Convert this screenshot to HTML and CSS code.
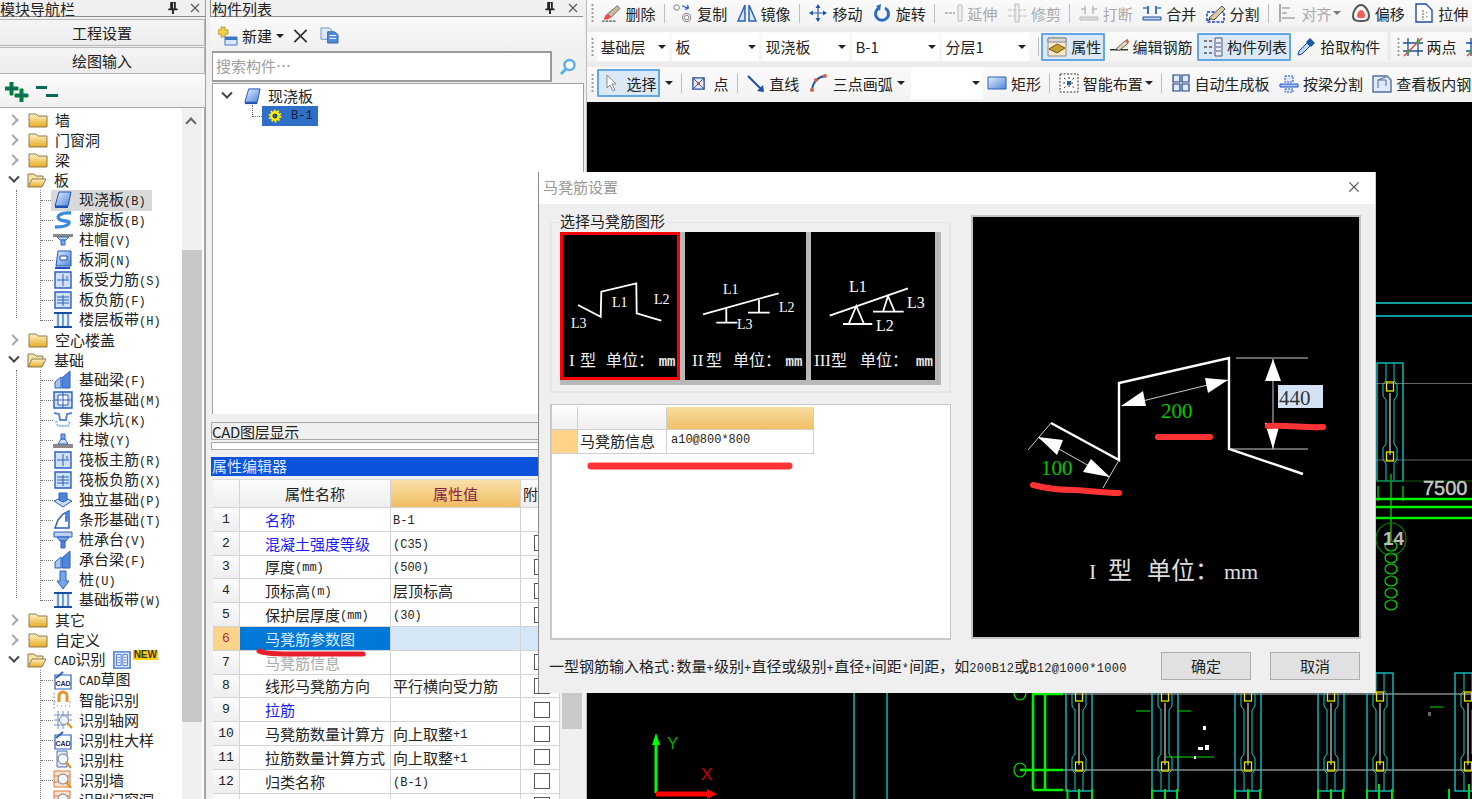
FILE: index.html
```html
<!DOCTYPE html>
<html lang="zh">
<head>
<meta charset="utf-8">
<title>马凳筋设置</title>
<link rel="stylesheet" href="styles.css">
</head>
<body>
<svg class="defs" aria-hidden="true">
  <defs>
    <linearGradient id="gold" x1="0" y1="0" x2="0" y2="1"><stop offset="0" stop-color="#fff3c4"/><stop offset="1" stop-color="#e8a820"/></linearGradient>
    <linearGradient id="blu" x1="0" y1="0" x2="1" y2="1"><stop offset="0" stop-color="#e4eefc"/><stop offset="1" stop-color="#4f86dc"/></linearGradient>
    <symbol id="f-c" viewBox="0 0 20 16"><path d="M1 2h7l2 2h9v11H1z" fill="url(#gold)" stroke="#8b7a55"/></symbol>
    <symbol id="f-o" viewBox="0 0 20 16"><path d="M1 15V2h6l2 2h7v3" fill="#f6e3a6" stroke="#8b7a55"/><path d="M1 15l4-8h14l-4 8z" fill="url(#gold)" stroke="#8b7a55"/></symbol>
    <symbol id="plate" viewBox="0 0 20 20"><path d="M6 2h12l-3 14H2z" fill="url(#blu)" stroke="#1f52b4"/><path d="M2 17h13" stroke="#1f52b4" stroke-width="2"/></symbol>
    <symbol id="spiral" viewBox="0 0 20 20"><path d="M18 3C8 2 3 6 6 9s11 1 10 4-8 4-14 4" fill="none" stroke="#3a8ae0" stroke-width="3.4"/></symbol>
    <symbol id="cap" viewBox="0 0 20 20"><path d="M0 4h20v3H0z" fill="#8a8a8a"/><path d="M4 7h12l-3 3h-6z" fill="#c8d8f0" stroke="#3568c0"/><path d="M8 10h4v5H8z" fill="#7aa4e8" stroke="#3568c0"/></symbol>
    <symbol id="hole" viewBox="0 0 20 20"><path d="M5 1h13v15H3z" fill="url(#blu)" stroke="#1f52b4"/><path d="M7 6h7v4H7z" fill="#fff" stroke="#1f52b4"/><path d="M2 18h15" stroke="#1f52b4" stroke-width="2"/></symbol>
    <symbol id="rb1" viewBox="0 0 20 20"><path d="M2 2h16v16H2z" fill="#cfe0f8" stroke="#2a60bc" stroke-width="1.4"/><path d="M10 4v12M4 10h12M14 6v3" stroke="#2a60bc" fill="none"/></symbol>
    <symbol id="rb2" viewBox="0 0 20 20"><path d="M2 2h16v16H2z" fill="#cfe0f8" stroke="#2a60bc" stroke-width="1.4"/><path d="M10 5v11M4 10h12M4 7h12M4 13h12" stroke="#2a60bc" fill="none"/></symbol>
    <symbol id="strip" viewBox="0 0 20 20"><path d="M1 3h18M1 17h18" stroke="#1c4fa8" stroke-width="2"/><path d="M5 4v12M10 4v12M15 4v12" stroke="#6f9be0" stroke-width="2.4"/></symbol>
    <symbol id="beam" viewBox="0 0 20 20"><path d="M2 18v-6l6-5v11z" fill="#a9c6f0" stroke="#2a60bc"/><path d="M9 8l8-7v17H9z" fill="#4f86dc" stroke="#2a60bc"/></symbol>
    <symbol id="raft" viewBox="0 0 20 20"><path d="M1 2h18v16H1z" fill="#cfe0f8" stroke="#2a60bc" stroke-width="1.4"/><path d="M5 5h10v10H5z" fill="#fff" stroke="#2a60bc"/><path d="M1 10h18M10 2v16" stroke="#2a60bc"/></symbol>
    <symbol id="pit" viewBox="0 0 20 20"><path d="M1 3l5 1 1 6h6l1-6 5-1" fill="none" stroke="#5a86d0" stroke-width="2"/><path d="M3 11l2 5h10l2-5" fill="none" stroke="#8fb0e8" stroke-width="2" stroke-dasharray="2 1"/></symbol>
    <symbol id="pier" viewBox="0 0 20 20"><path d="M0 14h20v4H0z" fill="#8a8a8a"/><path d="M5 14l3-5h4l3 5z" fill="#d0dff5" stroke="#3568c0"/><path d="M8 4h4v5H8z" fill="#7aa4e8" stroke="#3568c0"/></symbol>
    <symbol id="iso" viewBox="0 0 20 20"><path d="M1 11l9-4 9 4-9 6z" fill="#c8daf5" stroke="#2a60bc"/><path d="M6 10V3h8v7l-4 2z" fill="#4f86dc" stroke="#2a60bc"/></symbol>
    <symbol id="stripf" viewBox="0 0 20 20"><path d="M2 18l3-8 5-6 6-3v17z" fill="#fff" stroke="#2a60bc" stroke-width="1.5"/><path d="M12 3l5-2v10l-5 1z" fill="#4f86dc"/></symbol>
    <symbol id="pilecap" viewBox="0 0 20 20"><path d="M1 2h18v5H1z" fill="#bcd0ef" stroke="#2a60bc"/><path d="M4 7h12l-3 4H7z" fill="#7aa4e8" stroke="#2a60bc"/><path d="M8 11h4v7H8z" fill="#4f86dc" stroke="#2a60bc"/></symbol>
    <symbol id="pile" viewBox="0 0 20 20"><path d="M7 1h6v10h3l-6 8-6-8h3z" fill="#7aa4e8" stroke="#2a60bc"/></symbol>
    <symbol id="cad" viewBox="0 0 20 20"><path d="M2 5h16v14H2z" fill="#fff" stroke="#2a60bc" stroke-width="1.2"/><path d="M3 8l7-6" stroke="#2a60bc" stroke-width="2"/><text x="10" y="16" class="cadtxt" text-anchor="middle">CAD</text></symbol>
    <symbol id="magnet" viewBox="0 0 20 20"><path d="M6 12V6a4 4 0 018 0v6" fill="none" stroke="#e8942c" stroke-width="3"/><path d="M1 3v16M4 16h1M8 16h1M12 16h1M16 16h1M1 12h3M16 12h3" stroke="#4f86dc" stroke-dasharray="1.5 2"/></symbol>
    <symbol id="axis" viewBox="0 0 20 20"><path d="M1 5h18M1 10h18M1 15h12M5 1v18M10 1v18M15 1v12" stroke="#6f8fc8"/><circle cx="11" cy="10" r="4.5" fill="#eaf2ff" stroke="#888"/><path d="M14 13l5 5" stroke="#d9992c" stroke-width="2.4"/></symbol>
    <symbol id="col" viewBox="0 0 20 20"><path d="M4 1h10v16H4z" fill="#dfe8f8" stroke="#4f70b8"/><circle cx="10" cy="9" r="5" fill="#f2f6ff" stroke="#777"/><path d="M13 12l5 6" stroke="#d9992c" stroke-width="2.4"/></symbol>
    <symbol id="wall" viewBox="0 0 20 20"><path d="M1 1h16v16H1z" fill="#fbe3d2" stroke="#d9793c"/><path d="M1 6h16M1 12h16" stroke="#d9793c"/><circle cx="10" cy="9" r="5" fill="#f2f6ff" stroke="#777"/><path d="M13 12l5 6" stroke="#d9992c" stroke-width="2.4"/></symbol>
    <symbol id="split" viewBox="0 0 20 20"><path d="M1 1h18v18H1z" fill="#d8e6fb" stroke="#3a6cc4" stroke-width="1.5"/><path d="M4 4h5v12H4zM11 4h5v12h-5z" fill="#fff" stroke="#3a6cc4"/><path d="M5 7h3M5 10h3M5 13h3M12 7h3M12 10h3M12 13h3" stroke="#3a6cc4"/></symbol>
    <symbol id="gear" viewBox="0 0 16 16"><circle cx="8" cy="8" r="4.2" fill="none" stroke="#ffee00" stroke-width="3"/><circle cx="8" cy="8" r="6.4" fill="none" stroke="#ffee00" stroke-width="2" stroke-dasharray="2 2"/><circle cx="8" cy="8" r="2.2" fill="none" stroke="#222"/></symbol>

    <symbol id="t-del" viewBox="0 0 22 22"><path d="M1 20h16" stroke="#555" stroke-dasharray="3 1" stroke-width="1.5"/><path d="M7 12L18 3l3 3-10 10z" fill="#c9b8a0" stroke="#666"/><path d="M3 18c1-4 3-6 5-6l3 3c-1 2-4 4-8 3z" fill="#e84c4c"/></symbol>
    <symbol id="t-copy" viewBox="0 0 22 22"><circle cx="4" cy="5" r="3" fill="none" stroke="#777"/><circle cx="15" cy="16" r="4.500" fill="none" stroke="#777"/><circle cx="15" cy="16" r="2.500" fill="none" stroke="#777"/><path d="M10 3l7 3 M17 6l-1-4M17 6l-4 1" stroke="#2a60bc" fill="none" stroke-width="1.4"/></symbol>
    <symbol id="t-mirror" viewBox="0 0 20 20"><path d="M8 2v16H1zM12 2v16h7z" fill="#d8e6fb" stroke="#2a60bc" stroke-width="1.5"/></symbol>
    <symbol id="t-move" viewBox="0 0 20 20"><path d="M10 2v16M2 10h16" stroke="#1f5aa8" stroke-width="1.2"/><path d="M10 1L7.500 5h5zM10 19l-2.500-4h5zM1 10l4-2.500v5zM19 10l-4-2.500v5z" fill="#1f5aa8"/></symbol>
    <symbol id="t-rot" viewBox="0 0 20 20"><path d="M7 5a6.500 6.500 0 106 0" fill="none" stroke="#2a6cc8" stroke-width="3"/><path d="M9 1L4 3l4 5z" fill="#2a6cc8"/></symbol>
    <symbol id="t-ext" viewBox="0 0 20 20"><path d="M1 10h10" stroke="#bbb" stroke-width="2" stroke-dasharray="3 1"/><path d="M14 2h4v16h-4z" fill="#eee" stroke="#bbb"/></symbol>
    <symbol id="t-trim" viewBox="0 0 20 20"><path d="M1 7h18M1 13h18" stroke="#bbb" stroke-dasharray="4 1"/><path d="M8 1h4v18H8z" fill="#eee" stroke="#bbb"/></symbol>
    <symbol id="t-brk" viewBox="0 0 20 20"><path d="M1 14h18v3H1z" fill="#ddd" stroke="#bbb"/><path d="M6 3v8M14 3v8M2 6h5M18 6h-5" stroke="#bbb" stroke-width="1.6"/></symbol>
    <symbol id="t-mrg" viewBox="0 0 20 20"><path d="M1 14h18v3H1z" fill="#bcd0ef" stroke="#1f4fa0"/><path d="M6 3v8M14 3v8" stroke="#1f4fa0" stroke-width="1.6"/><path d="M1 5h6M19 5h-6" stroke="#2a80d8" stroke-width="1.6"/></symbol>
    <symbol id="t-seg" viewBox="0 0 20 20"><path d="M1 9h17v10H1z" fill="none" stroke="#1a3fd8" stroke-dasharray="3 1.5" stroke-width="1.5"/><path d="M3 15L16 3l3 3L8 17z" fill="#d9c9a8" stroke="#555"/><path d="M3 15l-1 3 3-1z" fill="#333"/></symbol>
    <symbol id="t-aln" viewBox="0 0 20 20"><path d="M3 1v18" stroke="#aaa" stroke-width="2"/><path d="M5 5h8M5 15h13M5 10h5" stroke="#bbb" stroke-width="2"/></symbol>
    <symbol id="t-off" viewBox="0 0 20 20"><path d="M2 13c0-5 4-11 8-11s8 6 8 11-4 5-8 5-8 0-8-5z" fill="none" stroke="#555" stroke-width="2"/><path d="M6 13c0-3 2-6 4-6s4 3 4 6-8 3-8 0z" fill="#f0605a"/></symbol>
    <symbol id="t-str" viewBox="0 0 20 20"><path d="M2 1h10l6 6v12H2z" fill="#fff" stroke="#1f4fa0" stroke-width="1.4"/><path d="M9 7v10M13 9v1M13 13v1" stroke="#555" stroke-dasharray="2 1"/></symbol>
    <symbol id="t-prop" viewBox="0 0 20 20"><path d="M1 1h18v18H1z" fill="#fdeacb" stroke="#888"/><path d="M1 1h18v4H1z" fill="#d8d8d8" stroke="#888"/><path d="M2 12l8-5 8 4-8 5z" fill="#c9a030" stroke="#6a5518"/></symbol>
    <symbol id="t-rebar" viewBox="0 0 22 20"><path d="M1 13h20" stroke="#333" stroke-width="1.6"/><path d="M8 12L18 3l3 3-10 8z" fill="#e8d8b0" stroke="#555"/><path d="M18 3l3 3 1-2-2-3z" fill="#e05a3a"/></symbol>
    <symbol id="t-list" viewBox="0 0 20 20"><path d="M1 3h3v2H1zM1 9h3v2H1zM1 15h3v2H1zM6 3h3v2H6zM6 9h3v2H6zM6 15h3v2H6z" fill="#777"/><path d="M12 1h7v18h-7z" fill="#e8eef8" stroke="#557"/><path d="M13 6h5M13 10h5M13 14h5" stroke="#557"/></symbol>
    <symbol id="t-pick" viewBox="0 0 20 20"><path d="M2 18l1-4 8-8 3 3-8 8z" fill="#bcd6f5" stroke="#1f4fa0"/><path d="M10 5l4-4 5 5-4 4z" fill="#1f5aa8"/></symbol>
    <symbol id="t-two" viewBox="0 0 20 20"><path d="M5 1v18M15 1v18M0 6h20M0 14h20" stroke="#1f4fa0" stroke-width="1.3"/><path d="M1 19L19 1" stroke="#e8402c" stroke-width="1.4"/><circle cx="5" cy="15" r="1.800" fill="#3aa83a"/><circle cx="15" cy="5" r="1.800" fill="#3aa83a"/></symbol>
    <symbol id="t-sel" viewBox="0 0 14 18"><path d="M2 1v13l3-3 3 6 2-1-3-6h4z" fill="#fff" stroke="#888"/></symbol>
    <symbol id="t-pt" viewBox="0 0 16 16"><path d="M2 2h12v12H2z" fill="#e4ecf8" stroke="#2a4a9c" stroke-width="1.4"/><path d="M2 2l12 12M14 2L2 14" stroke="#2a4a9c"/><circle cx="8" cy="8" r="1.600" fill="#e8402c"/></symbol>
    <symbol id="t-line" viewBox="0 0 20 20"><path d="M2 3l14 14" stroke="#1f4fa0" stroke-width="2"/><path d="M18 19l-7-1 6-6z" fill="#1f4fa0"/></symbol>
    <symbol id="t-arc" viewBox="0 0 20 20"><path d="M3 17C4 9 9 4 16 3" fill="none" stroke="#1f5aa8" stroke-width="1.8"/><circle cx="3" cy="17" r="2" fill="#e0603a"/><circle cx="7" cy="7" r="2" fill="#e0603a"/><circle cx="16" cy="3" r="2" fill="#e0603a"/></symbol>
    <symbol id="t-rect" viewBox="0 0 20 20"><path d="M1 4h18v12H1z" fill="url(#blu)" stroke="#2a60bc"/></symbol>
    <symbol id="t-smart" viewBox="0 0 20 20"><path d="M1 1h18v18H1z" fill="#fff" stroke="#333" stroke-dasharray="2 1.500"/><path d="M10 4v12M4 10h12M5 5l10 10M15 5L5 15" stroke="#333" stroke-dasharray="2 2"/><circle cx="10" cy="10" r="2" fill="#1f5aa8"/></symbol>
    <symbol id="t-auto" viewBox="0 0 20 20"><path d="M2 2h7v7H2zM11 2h7v7h-7zM2 11h7v7H2zM11 11h7v7h-7z" fill="#dfe9f8" stroke="#1f3f80" stroke-width="1.200"/></symbol>
    <symbol id="t-beam" viewBox="0 0 20 20"><path d="M1 11h18v3H1z" fill="#a9c6f0" stroke="#1f4fc8"/><path d="M6 3h8v6H6zM6 16h8v3H6z" fill="#dfe9f8" stroke="#1f4fc8" stroke-dasharray="2 1"/></symbol>
    <symbol id="t-view" viewBox="0 0 20 20"><path d="M1 3h14l4 4v12H1z" fill="#dfe9f8" stroke="#4f6f9c" stroke-width="1.4"/><path d="M6 15V7l8-3M6 7h8v6" fill="none" stroke="#4f6f9c"/></symbol>
    <symbol id="t-new" viewBox="0 0 20 20"><path d="M7 11h12v8H7z" fill="#d8e6fb" stroke="#3a78c8"/><path d="M7 11h12v3H7z" fill="#3a78c8"/><path d="M3 1h4v3h3v4H7v3H3V8H0V4h3z" fill="#f5d24a" stroke="#a8882a" stroke-width=".8"/></symbol>
    <symbol id="t-dup" viewBox="0 0 20 18"><path d="M1 1h9l2 2v10H1z" fill="#dfe9f8" stroke="#6a94c8"/><path d="M8 5h7l4 3v9H8z" fill="#4f8ad8" stroke="#3a68a8"/><path d="M10 9h7M10 12h7" stroke="#fff"/></symbol>
    <symbol id="t-plus" viewBox="0 0 24 20"><path d="M5 0h3v5h5v3H8v5H5V8H0V5h5zM15 7h3v5h5v3h-5v5h-3v-5h-5v-3h5z" fill="#0a6a5a" stroke="#083"/></symbol>
    <symbol id="t-minus" viewBox="0 0 24 20"><path d="M1 4h11v3H1zM11 12h12v3H11z" fill="#0a6a5a"/></symbol>
    <symbol id="t-pin" viewBox="0 0 12 14"><path d="M3 1h6v7h2v2H7v4H5v-4H1V8h2z" fill="#222"/><path d="M6 2h1v6H6z" fill="#eee"/></symbol>
    <symbol id="t-x" viewBox="0 0 12 12"><path d="M2 2l8 8M10 2l-8 8" stroke="#555" stroke-width="1.1"/></symbol>
    <symbol id="t-xb" viewBox="0 0 16 16"><path d="M1 1l14 14M15 1L1 15" stroke="#333" stroke-width="2"/></symbol>
    <symbol id="t-find" viewBox="0 0 18 18"><circle cx="10.500" cy="7" r="5" fill="#fff" stroke="#5aaee8" stroke-width="2.4"/><path d="M7 11l-5 5" stroke="#5aaee8" stroke-width="3"/></symbol>

    <g id="cadcol">
      <rect x="-13" y="0" width="26" height="118" fill="none" stroke="#10d0d0" stroke-width="1.3"/>
      <path d="M-4 0v18l-3 3v12l3 4v44l-3 4v12l3 3v18M4 0v18l3 3v12l-3 4v44l3 4v12l-3 3v18" fill="none" stroke="#10d0d0" stroke-width="1"/>
      <path d="M0 30v62" stroke="#808080" stroke-width="2"/>
      <rect x="-3.500" y="19" width="7" height="9" fill="none" stroke="#e6e600" stroke-width="1.3"/>
      <rect x="-3.500" y="89" width="7" height="9" fill="none" stroke="#e6e600" stroke-width="1.3"/>
    </g>
  </defs>
</svg>

<div class="app">
  <aside class="nav">
    <header class="pane-title nav-title"><span class="pane-name">模块导航栏</span><svg class="pin"><use href="#t-pin"/></svg><svg class="close"><use href="#t-x"/></svg></header>
    <button class="navbtn">工程设置</button>
    <button class="navbtn">绘图输入</button>
    <div class="nav-tools"><svg class="nt"><use href="#t-plus"/></svg><svg class="nt"><use href="#t-minus"/></svg></div>
    <div class="nav-body">
      <div class="tree">
        <div class="node"><i class="chev closed"></i><svg class="fold"><use href="#f-c"/></svg><span>墙</span></div>
        <div class="node"><i class="chev closed"></i><svg class="fold"><use href="#f-c"/></svg><span>门窗洞</span></div>
        <div class="node"><i class="chev closed"></i><svg class="fold"><use href="#f-c"/></svg><span>梁</span></div>
        <div class="node"><i class="chev open"></i><svg class="fold"><use href="#f-o"/></svg><span>板</span></div>
        <div class="group">
          <div class="leaf sel"><svg class="lic"><use href="#plate"/></svg><span>现浇板<b>(B)</b></span></div>
          <div class="leaf"><svg class="lic"><use href="#spiral"/></svg><span>螺旋板<b>(B)</b></span></div>
          <div class="leaf"><svg class="lic"><use href="#cap"/></svg><span>柱帽<b>(V)</b></span></div>
          <div class="leaf"><svg class="lic"><use href="#hole"/></svg><span>板洞<b>(N)</b></span></div>
          <div class="leaf"><svg class="lic"><use href="#rb1"/></svg><span>板受力筋<b>(S)</b></span></div>
          <div class="leaf"><svg class="lic"><use href="#rb2"/></svg><span>板负筋<b>(F)</b></span></div>
          <div class="leaf"><svg class="lic"><use href="#strip"/></svg><span>楼层板带<b>(H)</b></span></div>
        </div>
        <div class="node"><i class="chev closed"></i><svg class="fold"><use href="#f-c"/></svg><span>空心楼盖</span></div>
        <div class="node"><i class="chev open"></i><svg class="fold"><use href="#f-o"/></svg><span>基础</span></div>
        <div class="group">
          <div class="leaf"><svg class="lic"><use href="#beam"/></svg><span>基础梁<b>(F)</b></span></div>
          <div class="leaf"><svg class="lic"><use href="#raft"/></svg><span>筏板基础<b>(M)</b></span></div>
          <div class="leaf"><svg class="lic"><use href="#pit"/></svg><span>集水坑<b>(K)</b></span></div>
          <div class="leaf"><svg class="lic"><use href="#pier"/></svg><span>柱墩<b>(Y)</b></span></div>
          <div class="leaf"><svg class="lic"><use href="#rb1"/></svg><span>筏板主筋<b>(R)</b></span></div>
          <div class="leaf"><svg class="lic"><use href="#rb2"/></svg><span>筏板负筋<b>(X)</b></span></div>
          <div class="leaf"><svg class="lic"><use href="#iso"/></svg><span>独立基础<b>(P)</b></span></div>
          <div class="leaf"><svg class="lic"><use href="#stripf"/></svg><span>条形基础<b>(T)</b></span></div>
          <div class="leaf"><svg class="lic"><use href="#pilecap"/></svg><span>桩承台<b>(V)</b></span></div>
          <div class="leaf"><svg class="lic"><use href="#beam"/></svg><span>承台梁<b>(F)</b></span></div>
          <div class="leaf"><svg class="lic"><use href="#pile"/></svg><span>桩<b>(U)</b></span></div>
          <div class="leaf"><svg class="lic"><use href="#strip"/></svg><span>基础板带<b>(W)</b></span></div>
        </div>
        <div class="node"><i class="chev closed"></i><svg class="fold"><use href="#f-c"/></svg><span>其它</span></div>
        <div class="node"><i class="chev closed"></i><svg class="fold"><use href="#f-c"/></svg><span>自定义</span></div>
        <div class="node"><i class="chev open"></i><svg class="fold"><use href="#f-o"/></svg><span><b>CAD</b>识别</span><svg class="cadbadge"><use href="#split"/></svg><em class="newtag">NEW</em></div>
        <div class="group nolead">
          <div class="leaf"><svg class="lic"><use href="#cad"/></svg><span><b>CAD</b>草图</span></div>
          <div class="leaf"><svg class="lic"><use href="#magnet"/></svg><span>智能识别</span></div>
          <div class="leaf"><svg class="lic"><use href="#axis"/></svg><span>识别轴网</span></div>
          <div class="leaf"><svg class="lic"><use href="#cad"/></svg><span>识别柱大样</span></div>
          <div class="leaf"><svg class="lic"><use href="#col"/></svg><span>识别柱</span></div>
          <div class="leaf"><svg class="lic"><use href="#wall"/></svg><span>识别墙</span></div>
          <div class="leaf"><svg class="lic"><use href="#wall"/></svg><span>识别门窗洞</span></div>
        </div>
      </div>
      <div class="scroll"><i class="uparrow"></i><div class="thumb"></div></div>
    </div>
  </aside>

  <section class="mid">
    <header class="pane-title mid-title"><span class="pane-name">构件列表</span><svg class="pin"><use href="#t-pin"/></svg><svg class="close"><use href="#t-x"/></svg></header>
    <div class="mid-tools">
      <svg class="mi-new"><use href="#t-new"/></svg><span class="mi-label">新建</span><i class="caret"></i>
      <svg class="mi-x"><use href="#t-xb"/></svg>
      <svg class="mi-dup"><use href="#t-dup"/></svg>
    </div>
    <div class="search"><div class="search-in">搜索构件…</div><div class="search-go"><svg class="find"><use href="#t-find"/></svg></div></div>
    <div class="ctree">
      <div class="cnode"><i class="chev open"></i><svg class="cplate"><use href="#plate"/></svg><span>现浇板</span></div>
      <div class="cleaf"><span class="cpick"><svg class="cgear"><use href="#gear"/></svg><span>B-1</span></span></div>
    </div>
    <div class="layer-tab">CAD图层显示</div>
    <div class="layer-strip"></div>
    <div class="prop-title">属性编辑器</div>
    <div class="prop-wrap">
      <div class="ptable">
        <div class="prow phead"><div class="pn"></div><div class="pk pkh">属性名称</div><div class="pv pvh">属性值</div><div class="pc pch">附加</div></div>
        <div class="prow"><div class="pn">1</div><div class="pk link">名称</div><div class="pv"><b>B-1</b></div><div class="pc"></div></div>
        <div class="prow"><div class="pn">2</div><div class="pk link">混凝土强度等级</div><div class="pv"><b>(C35)</b></div><div class="pc"><i class="cb"></i></div></div>
        <div class="prow"><div class="pn">3</div><div class="pk">厚度<b>(mm)</b></div><div class="pv"><b>(500)</b></div><div class="pc"><i class="cb"></i></div></div>
        <div class="prow"><div class="pn">4</div><div class="pk">顶标高<b>(m)</b></div><div class="pv">层顶标高</div><div class="pc"><i class="cb"></i></div></div>
        <div class="prow"><div class="pn">5</div><div class="pk">保护层厚度<b>(mm)</b></div><div class="pv"><b>(30)</b></div><div class="pc"><i class="cb"></i></div></div>
        <div class="prow active"><div class="pn">6</div><div class="pk">马凳筋参数图</div><div class="pv"></div><div class="pc"></div></div>
        <div class="prow"><div class="pn">7</div><div class="pk dim">马凳筋信息</div><div class="pv"></div><div class="pc"><i class="cb"></i></div></div>
        <div class="prow"><div class="pn">8</div><div class="pk">线形马凳筋方向</div><div class="pv">平行横向受力筋</div><div class="pc"><i class="cb"></i></div></div>
        <div class="prow"><div class="pn">9</div><div class="pk link">拉筋</div><div class="pv"></div><div class="pc"><i class="cb"></i></div></div>
        <div class="prow"><div class="pn">10</div><div class="pk">马凳筋数量计算方</div><div class="pv">向上取整<b>+1</b></div><div class="pc"><i class="cb"></i></div></div>
        <div class="prow"><div class="pn">11</div><div class="pk">拉筋数量计算方式</div><div class="pv">向上取整<b>+1</b></div><div class="pc"><i class="cb"></i></div></div>
        <div class="prow"><div class="pn">12</div><div class="pk">归类名称</div><div class="pv"><b>(B-1)</b></div><div class="pc"><i class="cb"></i></div></div>
        <div class="prow"><div class="pn"></div><div class="pk"></div><div class="pv"></div><div class="pc"><i class="cb"></i></div></div>
      </div>
      <div class="pscroll"><div class="pthumb"></div></div>
      <svg class="mark mark-left" viewBox="0 0 110 10"><path d="M3 3c8 4 30 3 104 3" fill="none" stroke="#e8202c" stroke-width="5" stroke-linecap="round"/></svg>
    </div>
  </section>

  <main class="work">
    <div class="bars">
      <div class="tb tb1">
        <i class="grip"></i>
        <div class="tool"><svg class="ti"><use href="#t-del"/></svg><span>删除</span></div><i class="sep"></i>
        <div class="tool"><svg class="ti"><use href="#t-copy"/></svg><span>复制</span></div>
        <div class="tool"><svg class="ti"><use href="#t-mirror"/></svg><span>镜像</span></div><i class="sep"></i>
        <div class="tool"><svg class="ti"><use href="#t-move"/></svg><span>移动</span></div>
        <div class="tool"><svg class="ti"><use href="#t-rot"/></svg><span>旋转</span></div><i class="sep"></i>
        <div class="tool off"><svg class="ti"><use href="#t-ext"/></svg><span>延伸</span></div>
        <div class="tool off"><svg class="ti"><use href="#t-trim"/></svg><span>修剪</span></div><i class="sep"></i>
        <div class="tool off"><svg class="ti"><use href="#t-brk"/></svg><span>打断</span></div>
        <div class="tool"><svg class="ti"><use href="#t-mrg"/></svg><span>合并</span></div>
        <div class="tool"><svg class="ti"><use href="#t-seg"/></svg><span>分割</span></div><i class="sep"></i>
        <div class="tool off"><svg class="ti"><use href="#t-aln"/></svg><span>对齐</span><i class="caret"></i></div>
        <div class="tool"><svg class="ti"><use href="#t-off"/></svg><span>偏移</span></div>
        <div class="tool"><svg class="ti"><use href="#t-str"/></svg><span>拉伸</span></div>
      </div>
      <div class="tb tb2">
        <i class="grip"></i>
        <div class="combos">
          <div class="combo c-first"><span>基础层</span><i class="caret"></i></div>
          <div class="combo"><span>板</span><i class="caret"></i></div>
          <div class="combo"><span>现浇板</span><i class="caret"></i></div>
          <div class="combo"><span>B-1</span><i class="caret"></i></div>
          <div class="combo"><span>分层1</span><i class="caret"></i></div>
        </div>
        <i class="sep"></i>
        <div class="tool press p-prop"><svg class="ti"><use href="#t-prop"/></svg><span>属性</span></div>
        <div class="tool t-rebar"><svg class="ti"><use href="#t-rebar"/></svg><span>编辑钢筋</span></div>
        <div class="tool press p-list"><svg class="ti"><use href="#t-list"/></svg><span>构件列表</span></div>
        <div class="tool t-pick"><svg class="ti"><use href="#t-pick"/></svg><span>拾取构件</span></div>
        <i class="tb-break"></i>
        <i class="grip g-two"></i>
        <div class="tool"><svg class="ti"><use href="#t-two"/></svg><span>两点</span></div>
        <svg class="ti"><use href="#t-two"/></svg>
      </div>
      <div class="tb tb3">
        <i class="grip"></i>
        <div class="tool press p-sel"><svg class="ti-s"><use href="#t-sel"/></svg><span>选择</span></div><i class="caret"></i><i class="sep"></i>
        <div class="tool t-pt"><svg class="ti-pt"><use href="#t-pt"/></svg><span>点</span></div><i class="sep"></i>
        <div class="tool t-line"><svg class="ti"><use href="#t-line"/></svg><span>直线</span></div>
        <div class="tool"><svg class="ti"><use href="#t-arc"/></svg><span>三点画弧</span></div><i class="caret"></i>
        <div class="combo c-blank"><span></span><i class="caret"></i></div>
        <div class="tool t-rect"><svg class="ti"><use href="#t-rect"/></svg><span>矩形</span></div><i class="sep"></i>
        <div class="tool"><svg class="ti"><use href="#t-smart"/></svg><span>智能布置</span><i class="caret"></i></div><i class="sep"></i>
        <div class="tool"><svg class="ti"><use href="#t-auto"/></svg><span>自动生成板</span></div>
        <div class="tool"><svg class="ti"><use href="#t-beam"/></svg><span>按梁分割</span></div>
        <div class="tool"><svg class="ti"><use href="#t-view"/></svg><span>查看板内钢筋</span></div>
      </div>
    </div>
    <div class="canvas">
      <svg class="cadview" viewBox="587 102 885 697">
        <g class="cy">
          <path d="M854 680v119M887 680v119M1375 303h97M1375 316h97"/>
        </g>
        <path d="M1375 383.500h97M1375 460h97" stroke="#666" stroke-width="1"/>
        <path d="M1060 694h412M1060 770h412" stroke="#666" stroke-width="2"/>
        <use href="#cadcol" x="1390" y="363"/>
        <use href="#cadcol" x="1079" y="673"/>
        <use href="#cadcol" x="1165" y="673"/>
        <use href="#cadcol" x="1248" y="673"/>
        <use href="#cadcol" x="1331" y="673"/>
        <use href="#cadcol" x="1380" y="673"/>
        <use href="#cadcol" x="1468" y="673"/>
        <g class="gr2">
          <path d="M1375 499h97M1375 507h97M1375 518h97M1033 690v100M1045 690v100M1033 694h30M1020 770h43M1033 790h30"/>
        </g>
        <g class="gr">
          <path d="M1378 486v15M1403 486v15M1391 474v66M1136 711h14M1178 711h13M1165 757h49M1430 707h13"/>
          <path d="M1067.500 789v10M1079 789v10M1092 789v10M1152 789v10M1165 789v10M1177 789v10M1235 789v10M1248 789v10M1260 789v10M1318 789v10M1331 789v10M1343 789v10M1367 789v10M1379 784v15M1392 789v10M1449 789v10M1469 784v15" stroke-width="2"/>
          <ellipse cx="1391" cy="539" rx="15" ry="16" stroke="#0a7a0a"/>
          <ellipse cx="1391" cy="546" rx="6" ry="5"/><ellipse cx="1391" cy="558" rx="6" ry="5"/><ellipse cx="1391" cy="569" rx="6" ry="5"/><ellipse cx="1391" cy="581" rx="6" ry="5"/><ellipse cx="1391" cy="593" rx="6" ry="5"/><ellipse cx="1391" cy="605" rx="6" ry="5"/>
          <ellipse cx="1020" cy="693" rx="6" ry="7"/><ellipse cx="1020" cy="770" rx="6" ry="7"/>
        </g>
        <path d="M1375 481h97" stroke="#0a5a0a"/>
        <text x="1423" y="495" class="cad7500">7500</text>
        <text x="1383" y="545" class="cad14">14</text>
        <path d="M1203 726h3v4h-3zM1198 747h5v3h-5zM1205 745h4v5h-4zM1194 756h2v3h-2z" fill="#fff"/>
        <path d="M1428 712h3v4h-3z" fill="#666"/>
        <path d="M656 793v-50" stroke="#0f0" stroke-width="3"/><path d="M656 733l-4 12h8z" fill="#0f0"/>
        <path d="M656 794h52" stroke="#f00" stroke-width="5"/><path d="M717 794l-10-5v10z" fill="#f00"/>
        <text x="667" y="749" class="axy">Y</text>
        <text x="701" y="780" class="axx">X</text>
      </svg>
    </div>
  </main>

  <div class="dialog">
    <header class="dlg-title"><span>马凳筋设置</span><svg class="dlg-x"><use href="#t-x"/></svg></header>
    <div class="dlg-body">
      <div class="dlg-left">
        <fieldset class="pickset">
          <legend>选择马凳筋图形</legend>
          <div class="thumbs">
            <svg class="thumb-a" viewBox="0 0 120 148">
              <polyline class="w2" points="18,73 40.700,84.700 41.300,59.700 76.300,51.300 76.700,81.300 101.300,88.700"/>
              <text x="52" y="75" class="lb">L1</text><text x="94" y="72" class="lb">L2</text><text x="11" y="96" class="lb">L3</text>
              <text y="134" class="cap"><tspan x="9" class="capr">I</tspan><tspan x="20">型</tspan><tspan x="46">单位：</tspan><tspan x="98.700" class="capm">mm</tspan></text>
            </svg>
            <svg class="thumb-b" viewBox="0 0 121 148">
              <path class="w2" d="M18 82.300L93.700 61.300M41.300 76.300v14.400M31.300 90.700h21M74 68v12.700M63 80.700h21.700"/>
              <text x="38" y="62" class="lb">L1</text><text x="94" y="80" class="lb">L2</text><text x="52" y="97" class="lb">L3</text>
              <text y="134" class="cap"><tspan x="7" class="capr">II</tspan><tspan x="21">型</tspan><tspan x="48">单位：</tspan><tspan x="100.500" class="capm">mm</tspan></text>
            </svg>
            <svg class="thumb-c" viewBox="0 0 124 148">
              <path class="w2" d="M18.700 83.700L97 56.300M37.700 92L45.300 74 53 92M32 92h29.300M72 79.700L77 64l6.700 15.700M62 79.700h30.700"/>
              <text x="38" y="60" class="lb lb-l">L1</text><text x="96" y="76" class="lb lb-l">L3</text><text x="65" y="99" class="lb lb-l">L2</text>
              <text y="134" class="cap"><tspan x="3" class="capr">III</tspan><tspan x="20">型</tspan><tspan x="49">单位：</tspan><tspan x="105" class="capm">mm</tspan></text>
            </svg>
          </div>
        </fieldset>
        <div class="info">
          <div class="info-grid">
            <div class="ih ih0"></div><div class="ih ih1"></div><div class="ih ih2"></div>
            <div class="ir0"></div><div class="ir1">马凳筋信息</div><div class="ir2">a10@800*800</div>
          </div>
          <svg class="mark mark-info" viewBox="0 0 210 10"><path d="M4 5h202" fill="none" stroke="#f33" stroke-width="7" stroke-linecap="round"/></svg>
        </div>
      </div>
      <div class="preview">
        <svg class="prev-svg" viewBox="0 0 386 420">
          <polyline class="w3" points="78,206 146,243 146,166 256,141 256,232 330,257"/>
          <path class="thin" d="M78 206L55 233M146 243L130 271M263 141h72M256 232h79M300 142v90"/>
          <path class="thin" d="M66 221L136 260M149 189L255 163"/>
          <path d="M65 220l25 3-6 15zM137 260l-19-18-8 13zM148 189l22-15 3 15zM255 163l-23-2 3 15zM300 142l-8 22h16zM300 232l-8-26h15z" fill="#fff"/>
          <text x="68" y="258" class="gn">100</text>
          <text x="188" y="201" class="gn">200</text>
          <rect x="305" y="168" width="45" height="23" fill="#d3e3f5"/>
          <text x="306" y="188" class="gv">440</text>
          <text x="116" y="362" class="bigcap"><tspan class="bigm">I</tspan><tspan x="135">型</tspan><tspan x="174">单位：</tspan><tspan x="251" class="bigm">mm</tspan></text>
          <path d="M60 268c15 4 30 5 40 5s30 3 46 3" class="rd"/>
          <path d="M185 220h52" class="rd"/>
          <path d="M295 209c20-1 38 2 55 1" class="rd"/>
        </svg>
      </div>
    </div>
    <footer class="dlg-foot">
      <p class="hint">一型钢筋输入格式<b>:</b>数量<b>+</b>级别<b>+</b>直径或级别<b>+</b>直径<b>+</b>间距<b>*</b>间距，如<b>200B12</b>或<b>B12@1000*1000</b></p>
      <div class="dlg-btns"><button class="dbtn">确定</button><button class="dbtn">取消</button></div>
    </footer>
  </div>
</div>
</body>
</html>
```
FILE: styles.css
```css
* { box-sizing: border-box; }
html, body { margin: 0; padding: 0; height: 100%; overflow: hidden; }
body { font-family: "Noto Sans CJK SC", "Liberation Sans", sans-serif; font-size: 15px; color: #222; background: #f0f0f0; }
.defs { position: absolute; width: 0; height: 0; }
button { font: inherit; color: inherit; }
b { font-family: "Liberation Mono", monospace; font-size: 12px; font-weight: 400; }

.app { position: relative; display: flex; width: 1472px; height: 799px; overflow: hidden; }

/* panel titles */
.pane-title { position: relative; display: flex; align-items: center; height: 17px; border-bottom: 1px solid #8c8c8c; line-height: 15px; }
.pin { position: absolute; top: 1px; width: 12px; height: 13px; }
.close { position: absolute; top: 2px; width: 12px; height: 12px; }
.nav-title .pin { left: 167px; }
.nav-title .close { left: 189px; }
.mid-title .pin { left: 333px; }
.mid-title .close { left: 356px; }

/* left navigator */
.nav { flex: 0 0 206px; display: flex; flex-direction: column; height: 799px; border-right: 1px solid #a0a0a0; }
.navbtn { display: block; width: 205px; height: 27px; margin-top: 1px; padding: 0; background: linear-gradient(#f4f4f4, #ececec); border: 1px solid #b5b5b5; border-left: 0; line-height: 25px; }
.navbtn:first-of-type { margin-top: 2px; }
.nav-tools { display: flex; align-items: center; gap: 6px; height: 33px; padding: 2px 0 0 5px; background: linear-gradient(#fbfbfb, #f0f0f0); }
.nt { width: 24px; height: 20px; }
.nav-body { flex: 1; display: flex; height: 0; overflow: hidden; width: 205px; background: #fff; border-top: 1px solid #a8a8a8; border-right: 1px solid #a8a8a8; }
.tree { width: 182px; padding-top: 2px; overflow: hidden; flex: none; }
.node, .leaf { position: relative; display: flex; align-items: center; height: 20px; line-height: 20px; white-space: nowrap; }
.node .chev { margin: 0 9px 0 10px; }
.fold { width: 20px; height: 16px; margin-right: 7px; }
.chev { flex: none; display: block; width: 8px; height: 8px; border-right: 2px solid #aaa; border-bottom: 2px solid #aaa; }
.chev.closed { transform: rotate(-45deg); margin-right: 11px !important; margin-left: 9px !important; }
.chev.open { border-color: #444; transform: rotate(45deg) translate(-2px, -2px); }
.group { position: relative; }
.group::before { content: ""; position: absolute; left: 16px; top: 0; bottom: 12px; border-left: 1px dotted #777; }
.group.nolead::before { display: none; }
.group::after { content: ""; position: absolute; left: 40px; top: 0; bottom: 9px; border-left: 1px dotted #777; }
.leaf { padding-left: 53px; }
.leaf::before { content: ""; position: absolute; left: 41px; top: 10px; width: 12px; border-top: 1px dotted #777; }
.lic { flex: none; width: 20px; height: 20px; margin-right: 6px; }
.leaf.sel::after { content: ""; position: absolute; z-index: 0; left: 51px; top: 0; width: 101px; height: 21px; background: #d9d9d9; }
.leaf.sel > * { position: relative; z-index: 1; }
.cadtxt { font-family: "Liberation Sans", sans-serif; font-size: 7px; font-weight: 700; fill: #1c2a50; }
.cadbadge { width: 18px; height: 18px; margin-left: 7px; }
.newtag { margin: -11px 0 0 2px; padding: 0 1px; background: #ffd400; font: 700 10px/10px "Liberation Sans", sans-serif; color: #333; }
.scroll { flex: none; width: 20px; background: #f0f0f0; position: relative; padding-top: 142px; }
.uparrow { position: absolute; left: 5px; top: 11px; width: 8px; height: 8px; border-left: 2px solid #666; border-top: 2px solid #666; transform: rotate(45deg); }
.thumb { height: 472px; background: #c8c8c8; }

/* middle column */
.mid { flex: 0 0 381px; height: 799px; padding-left: 4px; border-right: 1px solid #bbb; }
.mid-title { width: 373px; border-left: 1px solid #8c8c8c; }
.mid-title .pane-name { margin-left: 1px; }
.mid-tools { display: flex; align-items: center; height: 34px; padding: 3px 0 0 8px; background: linear-gradient(#fafafa, #f0f0f0); margin-right: 2px; }
.mi-new { width: 20px; height: 20px; margin-right: 4px; }
.mi-label { width: 30px; }
.mi-x { width: 15px; height: 14px; margin-left: 9px; }
.mi-dup { width: 19px; height: 17px; margin-left: 12px; }
.caret { flex: none; display: block; width: 0; height: 0; margin-left: 4px; border: 4px solid transparent; border-top-color: #222; border-bottom: 0; }
.search { display: flex; height: 31px; margin-left: 2px; margin-right: 2px; }
.search-in { width: 340px; height: 31px; background: #fff; border: 1px solid #9a9a9a; border-width: 2px 2px 2px 1px; padding-left: 3px; color: #a0a0a0; line-height: 26px; }
.search-go { flex: 1; display: flex; align-items: center; justify-content: center; }
.find { width: 18px; height: 18px; }
.ctree { height: 331px; margin: 1px 2px 0 2px; background: #fff; border: 1px solid #a0a0a0; border-bottom: 0; padding-top: 2px; }
.cnode { display: flex; align-items: center; height: 20px; line-height: 20px; padding-left: 10px; }
.cnode .chev { margin: 0 12px 0 0; }
.cplate { width: 19px; height: 19px; margin-right: 6px; }
.cleaf { position: relative; display: flex; height: 20px; padding-left: 49px; }
.cleaf::before { content: ""; position: absolute; left: 39px; top: -1px; width: 11px; height: 11px; border-left: 1px dotted #666; border-bottom: 1px dotted #666; }
.cpick { display: flex; align-items: center; width: 56px; height: 20px; background: #2f6fc8; padding-left: 6px; font: 12px/20px "Liberation Mono", monospace; color: #10203c; }
.cgear { width: 14px; height: 14px; margin-right: 9px; }
.layer-tab { height: 18px; margin: 8px 0 0 1px; width: 375px; line-height: 17px; border: 1px solid #a8a8a8; border-width: 1px 0 1px 1px; background: #f0f0f0; white-space: nowrap; overflow: hidden; letter-spacing: -.3px; }
.layer-strip { height: 8px; margin: 2px 0 0 1px; width: 375px; background: #fff; border: 1px solid #a8a8a8; border-width: 1px 0 1px 1px; }
.prop-title { height: 19px; margin: 7px 0 0 1px; width: 375px; background: #0b52dc; color: #dbe8ff; line-height: 18px; padding-left: 1px; white-space: nowrap; overflow: hidden; }
.prop-wrap { position: relative; display: flex; margin-top: 3px; margin-left: 3px; }
.ptable { flex: none; width: 347px; background: #fff; border-top: 1px solid #ddd; }
.prow { display: grid; grid-template-columns: 27px 151px 130px 39px; height: 23.8px; }
.prow > div { border-right: 1px solid #d4d4d4; border-bottom: 1px solid #d4d4d4; display: flex; align-items: center; white-space: nowrap; overflow: hidden; }
.phead { height: 28px; }
.pn { justify-content: center; background: linear-gradient(#fbfbfb, #eeeeee); font: 13px "Liberation Mono", monospace; }
.pk { padding-left: 25px; }
.pv { padding-left: 2px; }
.pc { justify-content: center; padding-left: 4px; }
.prow b { font-size: 12px; margin-top: 3px; }
.pkh { padding-left: 0; justify-content: center; background: linear-gradient(#fbfbfb, #eeeeee); }
.pvh { padding-left: 0; justify-content: center; background: linear-gradient(#f9dfa8, #efbd62); color: #8a1f45; }
.pch { justify-content: flex-start !important; padding-left: 2px; background: linear-gradient(#fbfbfb, #eeeeee); }
.link { color: #1a1aff; }
.dim { color: #aaa; }
.cb { display: block; width: 16px; height: 16px; background: #fff; border: 1px solid #555; }
.active .pn { background: #fcd38a; color: #a33; }
.active .pk { background: #0078d7; color: #d8ecff; }
.active .pv, .active .pc { background: #d5e6f7; }
.pscroll { flex: none; width: 20px; margin-left: 2px; background: #f0f0f0; }
.pthumb { height: 250px; background: #c9c9c9; }
.mark { position: absolute; display: block; }
.mark-left { left: 43px; top: 169px; width: 110px; height: 10px; }

/* right work area */
.work { flex: 1; display: flex; flex-direction: column; height: 799px; min-width: 0; }
.bars { flex: 0 0 102px; display: flex; flex-direction: column; gap: 5px; background: #ececec; overflow: hidden; }
.tb { display: flex; align-items: center; gap: 9.4px; padding-left: 4px; background: linear-gradient(#fafafa, #f2f2f2); white-space: nowrap; }
.tb1 { flex: 0 0 27px; padding-bottom: 1px; }
.tb2 { flex: 0 0 30px; padding-bottom: 1px; }
.tb3 { flex: 0 0 35px; padding-bottom: 3px; }
.grip { flex: none; display: block; width: 3px; height: 20px; background: radial-gradient(circle, #999 1px, transparent 1.2px) 0 0 / 3px 4px; margin-right: -2px; }
.tb2 > .grip:first-child, .tb3 > .grip:first-child { margin-right: -6px; }
.sep { flex: none; display: block; width: 1px; height: 19px; margin: 0 -1px; background: #bdbdbd; }
.tool { flex: none; display: flex; align-items: center; gap: 4px; }
.off { color: #aaa; }
.off .caret { border-top-color: #777; margin-left: 0; }
.tool .caret { margin-left: -2px; }
.tb > .caret { margin-left: -5px; }
.ti { flex: none; width: 20px; height: 20px; }
.combos { display: flex; gap: 3px; }
.combo { flex: none; display: flex; align-items: center; width: 87px; height: 28px; background: #fff; padding-left: 3px; }
.combo span { flex: 1; }
.combo .caret { margin: 0 3px 0 0; }
.c-first { width: 72px; }
.press { height: 28px; padding: 0 2px 0 4px; background: #dbe9f7; border: 2px solid #62a7e3; border-radius: 1px; }
.p-prop { margin-left: -6px; width: 64px; }
.t-rebar { margin-left: -6px; }
.p-list { width: 94px; margin-left: -5px; }
.t-pick { margin-left: -4px; }
.p-sel { width: 63px; padding-left: 6px; gap: 7px; }
.ti-s { width: 14px; height: 18px; }
.ti-pt { width: 15px; height: 15px; }
.t-pt { gap: 8px; }
.t-line { gap: 3px; }
.t-rect { margin-left: -5px; }
.tb-break { flex: none; display: block; width: 4px; align-self: stretch; margin: 0 -3px; background: #ececec; }
.tb2 .g-two { margin-right: -7px; }
.c-blank { width: 72px; height: 32px; margin-left: -4px; background: #fff; }
.canvas { flex: 1; position: relative; background: #000; }
.cadview { position: absolute; left: 0; top: 0; width: 100%; height: 100%; }
.cy { fill: none; stroke: #10d0d0; stroke-width: 1.3; }
.gr { fill: none; stroke: #00e000; stroke-width: 1.2; }
.gr2 { fill: none; stroke: #00f000; stroke-width: 2.6; }
.cad7500 { font: 400 20px "Liberation Sans", sans-serif; fill: #c8c8c8; stroke: #c8c8c8; stroke-width: .4; }
.cad14 { font: 700 19px "Liberation Sans", sans-serif; fill: #bbb; }
.axy { font: 17px "Liberation Sans", sans-serif; fill: #0a0; }
.axx { font: 17px "Liberation Sans", sans-serif; fill: #c00; }

/* dialog */
.dialog { position: absolute; left: 538px; top: 172px; width: 837px; height: 521px; display: flex; flex-direction: column; background: #efefef; border-left: 1px solid #888; box-shadow: 1px 0 0 #ccc; }
.dlg-title { display: flex; align-items: center; justify-content: space-between; flex: 0 0 32px; background: #fff; padding: 0 14px 3px 4px; color: #999; }
.dlg-x { width: 14px; height: 14px; }
.dlg-body { display: flex; gap: 20px; padding-left: 11px; height: 436px; }
.dlg-left { flex: 0 0 400px; }
.pickset { display: block; margin: 8px 0 0; padding: 0 8px 8px; min-width: 0; border: 2px solid #e6e6e6; border-top-width: 1px; height: 181px; }
.pickset legend { padding: 0; line-height: 18px; height: 20px; color: #222; }
.thumbs { display: flex; gap: 5px; width: 381px; height: 153px; background: #b8b8b8; padding: 0 5px 5px 0; }
.thumbs svg { display: block; height: 148px; background: #000; }
.thumb-a { width: 120px; outline: 3px solid #f00; outline-offset: -3px; }
.thumb-b { width: 121px; }
.thumb-c { width: 124px; }
.w2 { fill: none; stroke: #fff; stroke-width: 1.8; }
.lb { font: 14px "Liberation Serif", serif; fill: #fff; }
.lb-l { font-size: 16px; }
.cap { font: 16px "Noto Sans CJK SC", sans-serif; fill: #eee; }
.capr { font: 17px "Liberation Serif", serif; }
.capm { font: 700 14px "Liberation Mono", monospace; }
.info { position: relative; height: 236px; margin-top: 11px; background: #fff; border: 2px solid #c8c8c8; border-width: 1px 1px 2px 2px; padding: 2px 0 0 0; }
.info-grid { display: grid; grid-template-columns: 26px 89px 147px; grid-template-rows: 23px 24px; width: 262px; }
.info-grid > div { border-right: 1px solid #cfcfcf; border-bottom: 1px solid #cfcfcf; }
.ih0, .ih1 { background: linear-gradient(#fdfdfd, #eee); }
.ih2 { background: linear-gradient(#f8dc9f, #f0c066); }
.ir0 { background: #fcd388; }
.ir1 { padding-left: 2px; line-height: 22px; white-space: nowrap; }
.ir2 { padding-left: 4px; font: 12px/21px "Liberation Mono", monospace; }
.mark-info { left: 35px; top: 56px; width: 206px; height: 10px; }
.preview { flex: 0 0 390px; height: 424px; margin-top: 11px; border: 2px solid #c4c4c4; background: #000; }
.prev-svg { display: block; width: 386px; height: 420px; }
.w3 { fill: none; stroke: #fff; stroke-width: 2.4; }
.thin { fill: none; stroke: #ccc; stroke-width: 1; }
.gn { font: 21px "Liberation Serif", serif; fill: #00c800; }
.gv { font: 21px "Liberation Serif", serif; fill: #333; }
.bigcap { font: 24px "Noto Sans CJK SC", sans-serif; fill: #ddd; }
.bigm { font: 22px "Liberation Serif", serif; }
.rd { fill: none; stroke: #f33; stroke-width: 6; stroke-linecap: round; }
.dlg-foot { flex: 1; display: flex; align-items: center; justify-content: space-between; padding: 0 15px 2px 10px; }
.hint { margin: 0; white-space: nowrap; }
.hint b { letter-spacing: .3px; }
.dlg-btns { display: flex; gap: 19px; }
.dbtn { width: 90px; height: 28px; padding: 0; background: #e1e1e1; border: 1px solid #adadad; }
```
